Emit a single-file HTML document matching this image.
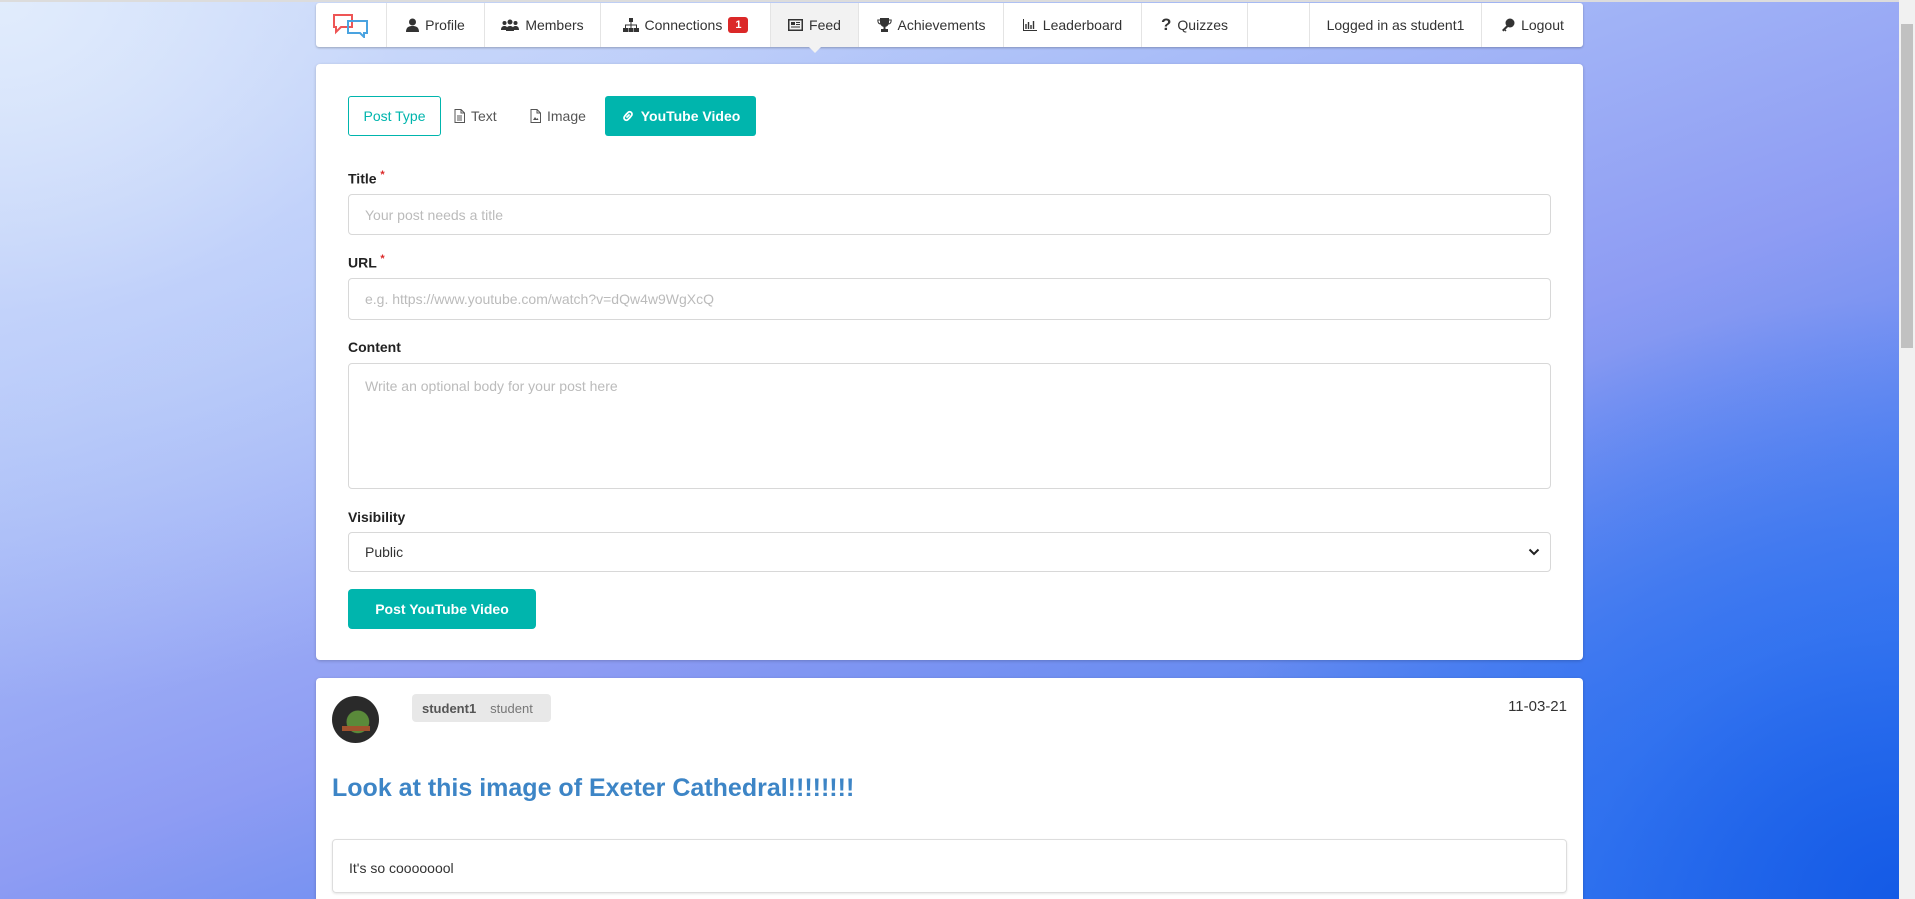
<!DOCTYPE html>
<html style="overflow:hidden;width:1915px;height:899px"><head><meta charset="utf-8"><style>
*{box-sizing:border-box;margin:0;padding:0}
body{width:1915px;height:899px;overflow:hidden;font-family:"Liberation Sans",sans-serif;color:#333;position:relative;
background:
radial-gradient(ellipse 900px 700px at 0px 0px,rgba(225,236,252,1) 0%,rgba(200,215,250,.6) 45%,rgba(200,215,250,0) 100%),
radial-gradient(ellipse 700px 600px at 1900px 899px,rgba(20,90,230,1) 0%,rgba(40,110,240,.7) 45%,rgba(60,120,240,0) 100%),
linear-gradient(160deg,#d7e4fb 0%,#a9bdf8 30%,#8e9cf3 55%,#5b86f0 75%,#2a6ce8 100%);}
.topline{position:absolute;left:0;top:0;width:1915px;height:2px;background:#dcdcdc}
.nav{position:absolute;left:316px;top:3px;width:1267px;height:44px;background:#fff;border-radius:3px;box-shadow:0 1px 2px rgba(0,0,0,.25);display:flex;font-size:14px;color:#333}
.nav div{height:44px;display:flex;align-items:center;justify-content:center;border-right:1px solid #e4e4e4;white-space:nowrap;gap:6px}
.nav .act{background:#f2f2f2;position:relative}
.nav .act:after{content:"";position:absolute;bottom:-6px;left:50%;margin-left:-6px;border:6px solid transparent;border-top-color:#f2f2f2;border-bottom:0}
.badge{background:#db2828;color:#fff;font-size:11px;font-weight:bold;border-radius:3px;padding:2px 7px}
.card{position:absolute;left:316px;background:#fff;border-radius:4px;box-shadow:0 1px 3px rgba(0,0,0,.2)}
label{position:absolute;left:32px;font-weight:bold;font-size:14px;color:#222}
label sup{color:#db2828;font-size:11px}
.inp{position:absolute;left:32px;width:1203px;border:1px solid #d8d8d8;border-radius:4px;font-size:14px;color:#bbb;padding-left:16px;display:flex;align-items:center}
.tab{position:absolute;top:32px;height:40px;display:flex;align-items:center;font-size:14px;color:#555;gap:6px}
.sb{position:absolute;left:1899px;top:0;width:16px;height:899px;background:#f1f1f1}
.sb div{position:absolute;left:2px;top:24px;width:12px;height:324px;background:#c1c1c1}
</style></head><body>
<div class="topline"></div>
<div class="nav">
 <div style="width:71px"><svg width="40" height="26" viewBox="0 0 40 26"><path d="M3 3h18v12H10l-5 5v-5H3z" fill="none" stroke="#e55" stroke-width="2"/><path d="M17 9h19v12h-3v4l-4-4H17z" fill="none" stroke="#4aa3e0" stroke-width="2"/></svg></div>
 <div style="width:98px"><svg width="13" height="14" viewBox="0 0 13 14"><circle cx="6.5" cy="4" r="3.5" fill="#333"/><path d="M0 14c0-5 3-6 6.5-6S13 9 13 14z" fill="#333"/></svg>Profile</div>
 <div style="width:116px"><svg width="18" height="12" viewBox="0 0 18 12"><circle cx="9" cy="3" r="2.5" fill="#333"/><circle cx="3.5" cy="4" r="2" fill="#333"/><circle cx="14.5" cy="4" r="2" fill="#333"/><path d="M5 12c0-4 2-5 4-5s4 1 4 5zM0 11c0-3 1.5-4 3.5-4s3 1 3 4zM11.5 11c0-3 1-4 3-4s3.5 1 3.5 4z" fill="#333"/></svg>Members</div>
 <div style="width:170px"><svg width="16" height="14" viewBox="0 0 16 14"><rect x="6" y="0" width="4" height="4" fill="#333"/><path d="M8 4v3M2.5 10V7h11v3M8 7v3" stroke="#333" fill="none"/><rect x="0" y="10" width="5" height="4" fill="#333"/><rect x="5.5" y="10" width="5" height="4" fill="#333"/><rect x="11" y="10" width="5" height="4" fill="#333"/></svg>Connections <span class="badge">1</span></div>
 <div class="act" style="width:88px"><svg width="15" height="12" viewBox="0 0 15 12"><rect x=".75" y=".75" width="13.5" height="10.5" fill="none" stroke="#333" stroke-width="1.5"/><rect x="3" y="3" width="4" height="3" fill="#333"/><path d="M8 3.5h4M8 5.5h4M3 8h9" stroke="#333"/></svg>Feed</div>
 <div style="width:145px"><svg width="15" height="14" viewBox="0 0 15 14"><path d="M3 0h9v4c0 3-2 5-4.5 5S3 7 3 4z" fill="#333"/><path d="M3 2H0.8c0 3 1.5 4 3 4M12 2h2.2c0 3-1.5 4-3 4" fill="none" stroke="#333"/><rect x="6.5" y="8" width="2" height="3" fill="#333"/><rect x="4" y="11" width="7" height="3" fill="#333"/></svg>Achievements</div>
 <div style="width:138px"><svg width="14" height="12" viewBox="0 0 14 12"><path d="M.5 0v11.5H14" stroke="#333" fill="none"/><path d="M3 5v5M5.5 3v7M8 6v4M10.5 2v8" stroke="#333" stroke-width="1.4"/></svg>Leaderboard</div>
 <div style="width:106px"><b style="font-size:17px">?</b>Quizzes</div>
 <div style="width:62px"></div>
 <div style="width:172px">Logged in as student1</div>
 <div style="width:101px;border:0"><svg width="14" height="14" viewBox="0 0 14 14"><circle cx="9" cy="5" r="4.5" fill="#333"/><path d="M6 7L1 12l1.5 1.5 1-1 1 1 1-1-1-1 3-3z" fill="#333"/></svg>Logout</div>
</div>

<div class="card" style="top:64px;height:596px;width:1267px">
 <div class="tab" style="left:32px;width:93px;border:1px solid #00b5ad;border-radius:3px;color:#00b5ad;justify-content:center">Post Type</div>
 <div class="tab" style="left:138px"><svg width="11" height="14" viewBox="0 0 11 14"><path d="M1 .5h6l3.5 3.5v9.5H1z M7 .5V4h3.5M3 7h5M3 9h5M3 11h5" fill="none" stroke="#555"/></svg>Text</div>
 <div class="tab" style="left:214px"><svg width="11" height="14" viewBox="0 0 11 14"><path d="M1 .5h6l3.5 3.5v9.5H1z M7 .5V4h3.5" fill="none" stroke="#555"/><path d="M3 11l2-3 1.5 2 1-1 1 2z" fill="#555"/></svg>Image</div>
 <div class="tab" style="left:289px;width:151px;background:#00b5ad;border-radius:3px;color:#fff;font-weight:bold;justify-content:center"><svg width="14" height="14" viewBox="0 0 14 14"><path d="M6 8l2-2M5 5.5L7 3.5a2.3 2.3 0 013.3 3.3L8.5 9M9 8.5L7 10.5A2.3 2.3 0 013.7 7.2L5.5 5" fill="none" stroke="#fff" stroke-width="1.8" stroke-linecap="round"/></svg>YouTube Video</div>
 <label style="top:105px">Title <sup>*</sup></label>
 <div class="inp" style="top:130px;height:41px">Your post needs a title</div>
 <label style="top:189px">URL <sup>*</sup></label>
 <div class="inp" style="top:214px;height:42px">e.g. https://www.youtube.com/watch?v=dQw4w9WgXcQ</div>
 <label style="top:275px">Content</label>
 <div class="inp" style="top:299px;height:126px;align-items:flex-start;padding-top:14px">Write an optional body for your post here</div>
 <label style="top:445px">Visibility</label>
 <div class="inp" style="top:468px;height:40px;color:#333">Public<svg style="position:absolute;right:10px;top:15px" width="12" height="8" viewBox="0 0 12 8"><path d="M1.5 1.5l4.5 4.5 4.5-4.5" fill="none" stroke="#222" stroke-width="2"/></svg></div>
 <div style="position:absolute;left:32px;top:525px;width:188px;height:40px;background:#00b5ad;border-radius:4px;color:#fff;font-weight:bold;font-size:14px;display:flex;align-items:center;justify-content:center">Post YouTube Video</div>
</div>

<div class="card" style="top:678px;height:221px;width:1267px;border-radius:4px 4px 0 0">
 <div style="position:absolute;left:16px;top:18px;width:47px;height:47px;border-radius:50%;background:radial-gradient(circle at 55% 55%,#5a8a3a 0 30%,#2a2a2a 32%);overflow:hidden"><div style="position:absolute;left:10px;top:30px;width:28px;height:5px;background:#a0522d"></div></div>
 <div style="position:absolute;left:96px;top:16px;width:139px;height:28px;background:#e8e8e8;border-radius:4px;font-size:13px;display:flex;align-items:center;padding-left:10px;gap:14px"><b style="color:#555">student1</b><span style="color:#777">student</span></div>
 <div style="position:absolute;right:16px;top:20px;font-size:15px;color:#333">11-03-21</div>
 <div style="position:absolute;left:16px;top:96px;font-size:25px;font-weight:bold;color:#3d85c6">Look at this image of Exeter Cathedral!!!!!!!!</div>
 <div style="position:absolute;left:16px;top:161px;width:1235px;height:54px;border:1px solid #ddd;border-radius:4px;box-shadow:0 1px 2px rgba(0,0,0,.1);font-size:14px;padding:20px 16px">It's so coooooool</div>
</div>
<div class="sb"><div></div></div>
</body></html>
